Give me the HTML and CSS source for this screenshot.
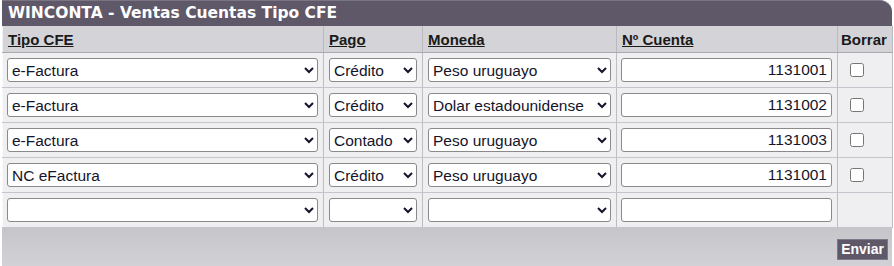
FILE: index.html
```html
<!DOCTYPE html>
<html>
<head>
<meta charset="utf-8">
<link rel="stylesheet" href="styles.css">
</head>
<body>
<div class="panel">
  <div class="title">WINCONTA - Ventas Cuentas Tipo CFE</div>
  <table class="grid">
    <colgroup>
      <col class="c-tipo"><col class="c-pago"><col class="c-mon"><col class="c-cta"><col class="c-bor">
    </colgroup>
    <thead>
      <tr>
        <th><u>Tipo CFE</u></th>
        <th><u>Pago</u></th>
        <th><u>Moneda</u></th>
        <th><u>Nº Cuenta</u></th>
        <th class="bor">Borrar</th>
      </tr>
    </thead>
    <tbody>
      <tr>
        <td><select class="s-tipo"><option>e-Factura</option></select></td>
        <td><select class="s-pago"><option>Crédito</option></select></td>
        <td><select class="s-mon"><option>Peso uruguayo</option></select></td>
        <td><input class="cta" type="text" value="1131001"></td>
        <td class="chk"><input type="checkbox"></td>
      </tr>
      <tr>
        <td><select class="s-tipo"><option>e-Factura</option></select></td>
        <td><select class="s-pago"><option>Crédito</option></select></td>
        <td><select class="s-mon"><option>Dolar estadounidense</option></select></td>
        <td><input class="cta" type="text" value="1131002"></td>
        <td class="chk"><input type="checkbox"></td>
      </tr>
      <tr>
        <td><select class="s-tipo"><option>e-Factura</option></select></td>
        <td><select class="s-pago"><option>Contado</option></select></td>
        <td><select class="s-mon"><option>Peso uruguayo</option></select></td>
        <td><input class="cta" type="text" value="1131003"></td>
        <td class="chk"><input type="checkbox"></td>
      </tr>
      <tr>
        <td><select class="s-tipo"><option>NC eFactura</option></select></td>
        <td><select class="s-pago"><option>Crédito</option></select></td>
        <td><select class="s-mon"><option>Peso uruguayo</option></select></td>
        <td><input class="cta" type="text" value="1131001"></td>
        <td class="chk"><input type="checkbox"></td>
      </tr>
      <tr>
        <td><select class="s-tipo"><option></option></select></td>
        <td><select class="s-pago"><option></option></select></td>
        <td><select class="s-mon"><option></option></select></td>
        <td><input class="cta" type="text" value=""></td>
        <td class="chk"></td>
      </tr>
    </tbody>
  </table>
  <div class="footer"><button class="send">Enviar</button></div>
</div>
</body>
</html>
```

FILE: styles.css
```css
html, body {
  margin: 0;
  padding: 0;
  background: #ffffff;
}
body {
  font-family: "Liberation Sans", Arial, sans-serif;
}
.panel {
  width: 890px;
  margin-left: 2px;
  height: 266px;
  display: flex;
  flex-direction: column;
}
.title {
  height: 26px;
  box-sizing: border-box;
  background: #5f5869;
  border-top: 1px solid #7a7484;
  border-top-right-radius: 12px;
  color: #ffffff;
  font-family: "DejaVu Sans", Verdana, sans-serif;
  font-weight: bold;
  font-size: 15.5px;
  line-height: 24px;
  padding-left: 6px;
}
.grid {
  border-collapse: collapse;
  table-layout: fixed;
  width: 890px;
}
.c-tipo { width: 321px; }
.c-pago { width: 99px; }
.c-mon { width: 194px; }
.c-cta { width: 221px; }
.c-bor { width: 55px; }
.grid th {
  background: #d4d4d8;
  height: 26px;
  padding: 0 0 0 5px;
  text-align: left;
  font-size: 15px;
  color: #1a1a1a;
  border-left: 1px solid #f2f2f4;
  border-right: 1px solid #b9b9be;
  border-bottom: 1px solid #a9a9ae;
}
.grid th.bor { padding-left: 3px; }
.grid td {
  background: #efeff1;
  height: 34px;
  padding: 0 0 0 4px;
  border-left: 1px solid #fafafb;
  border-right: 1px solid #bdbdc2;
  border-bottom: 1px solid #c2c6cc;
  border-top: 1px solid #f6f6f8;
  vertical-align: middle;
}
.grid select, .grid input.cta {
  font-family: "Liberation Sans", Arial, sans-serif;
  font-size: 15.5px;
  height: 24px;
  box-sizing: border-box;
  border: 1px solid #8a8a8a;
  border-radius: 3px;
  background: #ffffff;
  color: #14142a;
  display: block;
}
.s-tipo { width: 311px; }
.s-pago { width: 88px; margin-left: 1px; }
.s-mon { width: 183px; margin-left: 1px; }
input.cta {
  width: 211px;
  text-align: right;
  padding: 0 4px;
}
.chk input {
  width: 14px;
  height: 14px;
  margin: 0 0 0 8px;
  display: block;
}
.footer {
  flex: 1;
  background: linear-gradient(#c6c6ca, #d2d2d6);
  display: flex;
  justify-content: flex-end;
  align-items: center;
  padding-right: 4px;
}
.send {
  font-family: "Liberation Sans", Arial, sans-serif;
  font-weight: bold;
  font-size: 14px;
  color: #ffffff;
  background: #5f5869;
  border: 1px solid #7d7887;
  padding: 0 3px;
  height: 21px;
  line-height: 19px;
  margin-top: 4px;
}
```
